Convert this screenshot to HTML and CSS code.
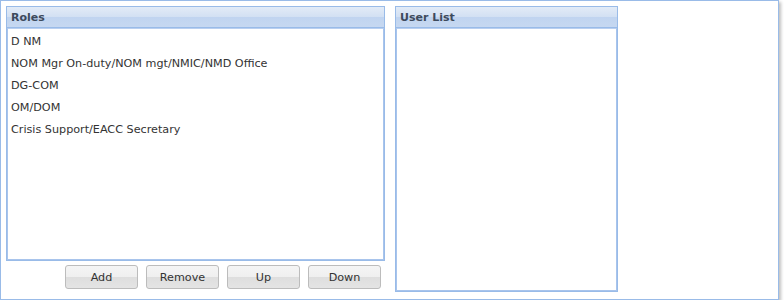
FILE: index.html
```html
<!DOCTYPE html>
<html>
<head>
<meta charset="utf-8">
<link rel="stylesheet" href="styles.css">
</head>
<body>
<div class="frame">
  <div class="left-col">
    <div class="panel roles">
      <div class="panel-header">Roles</div>
      <div class="panel-body">
        <ul class="list">
          <li>D NM</li>
          <li>NOM Mgr On-duty/NOM mgt/NMIC/NMD Office</li>
          <li>DG-COM</li>
          <li>OM/DOM</li>
          <li>Crisis Support/EACC Secretary</li>
        </ul>
      </div>
    </div>
    <div class="buttons">
      <button class="btn">Add</button>
      <button class="btn">Remove</button>
      <button class="btn">Up</button>
      <button class="btn">Down</button>
    </div>
  </div>
  <div class="panel users">
    <div class="panel-header">User List</div>
    <div class="panel-body"></div>
  </div>
</div>
</body>
</html>
```
FILE: styles.css
```css
html, body {
  margin: 0;
  padding: 0;
  background: #ffffff;
}
body {
  font-family: "DejaVu Sans", Tahoma, sans-serif;
}
.frame {
  box-sizing: border-box;
  width: 779px;
  height: 300px;
  border: 1px solid #99bbe8;
  box-shadow: 2px 2px 3px rgba(0,0,0,0.25);
  padding: 5px;
  display: flex;
  gap: 10px;
  align-items: flex-start;
}
.left-col {
  display: flex;
  flex-direction: column;
  width: 379px;
}
.panel {
  box-sizing: border-box;
  border: 1px solid #99bbe8;
  display: flex;
  flex-direction: column;
  background: #fff;
}
.roles {
  height: 255px;
}
.users {
  width: 223px;
  height: 286px;
}
.panel-header {
  height: 21px;
  box-sizing: border-box;
  border-bottom: 1px solid #99bbe8;
  background: linear-gradient(to bottom, #e2ebf7 0%, #d2e0f3 50%, #c0d4f0 50%, #c6d8f1 100%);
  font-size: 11px;
  font-weight: bold;
  color: #3d4a5c;
  line-height: 22px;
  padding-left: 4px;
}
.panel-body {
  flex: 1;
  border: 1px solid #a8c4ec;
  border-top: 1px solid #b9cff0;
  background: #fff;
}
.list {
  list-style: none;
  margin: 0;
  padding: 2px 0 0 0;
}
.list li {
  height: 22px;
  line-height: 22px;
  font-size: 11.2px;
  color: #333;
  padding-left: 3px;
}
.buttons {
  display: flex;
  justify-content: flex-end;
  gap: 8px;
  padding-right: 4px;
  margin-top: 4px;
}
.btn {
  box-sizing: border-box;
  width: 73px;
  height: 24px;
  border: 1px solid #bcbcbc;
  border-radius: 3px;
  background: linear-gradient(to bottom, #f5f5f5 0%, #efefef 50%, #dedede 50%, #e4e4e4 100%);
  font-family: "DejaVu Sans", Tahoma, sans-serif;
  font-size: 11.2px;
  color: #333;
  padding: 0;
}
```
